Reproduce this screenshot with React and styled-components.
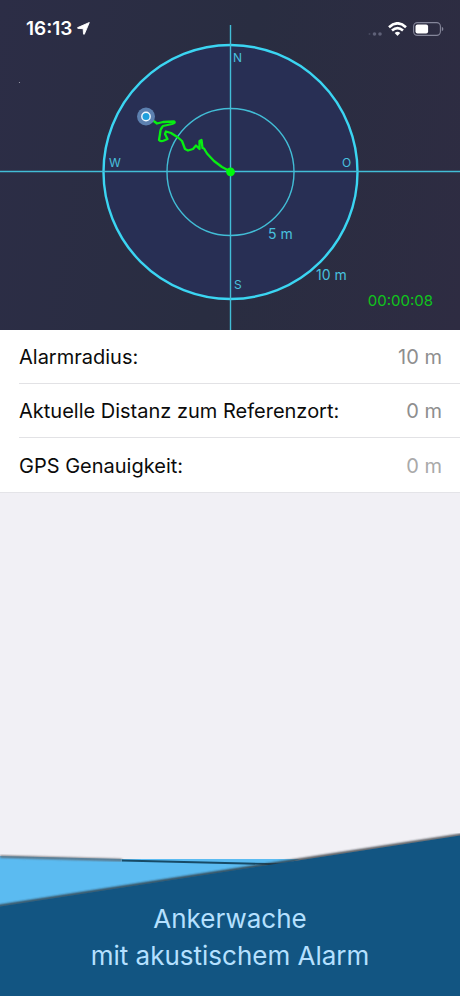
import React from "react";
import styled, { createGlobalStyle } from "styled-components";

const GlobalStyle = createGlobalStyle`
  * {
    box-sizing: border-box;
  }
  body {
    margin: 0;
    background-color: #f1f0f5;
    font-family: Inter, "Liberation Sans", sans-serif;
  }
`;

const S = {
  Page: styled.div`
    display: flex;
    flex-direction: column;
    min-height: 100vh;
  `,
  Header: styled.header`
    position: relative;
    background-color: #2b2d43;
  `,
  StatusBar: styled.div`
    position: absolute;
    top: 0;
    left: 0;
    right: 0;
    display: flex;
    justify-content: space-between;
    align-items: center;
    height: 57px;
    padding: 0 16px 0 26px;
    color: #ffffff;
  `,
  StatusGroup: styled.div`
    display: flex;
    align-items: center;
    gap: ${props => props.$gap}px;
  `,
  Time: styled.time`
    font-size: 19px;
    font-weight: 600;
  `,
  Radar: styled.svg`
    display: block;
    width: 100%;
    height: auto;
    background-image: linear-gradient(100deg, #2c2d46, #292d41 50%, #2e2c42);
  `,
  RadarLabel: styled.text`
    font-size: ${props => (props.$small ? 12 : 14)}px;
    fill: #48c0de;
  `,
  Timer: styled.text`
    font-size: 15px;
    fill: #10c51c;
  `,
  List: styled.dl`
    margin: 0;
    padding-left: 19px;
    background-color: #ffffff;
    border-bottom: 1px solid #e4e4e8;
  `,
  Row: styled.div`
    display: flex;
    justify-content: space-between;
    align-items: center;
    height: 54px;
    padding: 1px 18px 0 0;
    border-bottom: 1px solid #e2e2e5;

    &:last-child {
      border-bottom: 0;
    }
  `,
  Label: styled.dt`
    font-size: 20px;
    color: #0b0b0b;
  `,
  Value: styled.dd`
    margin: 0;
    font-size: 20px;
    color: ${props => (props.$faded ? "#a9a9a9" : "#8e8e8e")};
  `,
  Footer: styled.footer`
    position: relative;
    margin-top: auto;
    padding: 67px 16px 22px;
    text-align: center;
  `,
  Waves: styled.svg`
    position: absolute;
    top: 0;
    left: 0;
    width: 100%;
    height: 100%;
  `,
  Title: styled.h1`
    position: relative;
    margin: 0;
    font-size: 26px;
    font-weight: 400;
    line-height: 37px;
    color: #b5e0ff;
  `
};

const readings = [
  { label: "Alarmradius:", value: "10 m" },
  { label: "Aktuelle Distanz zum Referenzort:", value: "0 m" },
  { label: "GPS Genauigkeit:", value: "0 m", faded: true }
];

const LocationIcon = () => (
  <svg width="13" height="13" viewBox="0 0 13 13" aria-hidden="true">
    <path
      d="M12.3 .5 L.7 5.6 Q.2 6.2 1 6.4 L6.2 6.7 L6.5 12 Q6.8 12.9 7.4 12.1 Z"
      fill="#ffffff"
      stroke="#ffffff"
      strokeWidth="0.9"
      strokeLinejoin="round"
    />
  </svg>
);

const SignalIcon = () => (
  <svg width="15" height="14" viewBox="0 0 15 14" fill="#5f6178" aria-hidden="true">
    <circle cx="2.5" cy="12" r="1" opacity="0.5" />
    <circle cx="7.5" cy="12" r="1.8" />
    <circle cx="13" cy="12" r="1.8" />
  </svg>
);

const WifiIcon = () => (
  <svg width="19" height="14" viewBox="0 0 19 14" aria-hidden="true">
    <g fill="none" stroke="#ffffff" strokeWidth="2.6">
      <path d="M1 5.2 Q9.5 -2.6 18 5.2" />
      <path d="M4 8.5 Q9.5 3.6 15 8.5" />
    </g>
    <path
      d="M6.7 11 Q9.5 8.7 12.3 11 L9.9 13.5 Q9.5 13.9 9.1 13.5 Z"
      fill="#ffffff"
    />
  </svg>
);

const BatteryIcon = () => (
  <svg width="31" height="14" viewBox="0 0 31 14" aria-hidden="true">
    <rect
      x="0.6"
      y="0.6"
      width="26.8"
      height="12.8"
      rx="3.8"
      fill="none"
      stroke="#85869a"
      strokeWidth="1.1"
    />
    <rect x="2.5" y="2.4" width="12.6" height="9.2" rx="2" fill="#ffffff" />
    <path d="M28.8 4.8 Q30.4 5.6 30.4 7 Q30.4 8.4 28.8 9.2 Z" fill="#85869a" />
  </svg>
);

// Position history, from the current position back to the anchor
const TRACK =
  "M146 116 L151 119 L157 123.5 L163 122 L174 121.5 Q176 123 172 124 L163 126" +
  " Q160 129 160 134 L159 140 Q161 142 164 140.5 L167.5 139 L165 134 L166 131.5" +
  " L171 133 L178 137.5 L182 141 L185 149 L188 150.5 L193 149 L196 145.5" +
  " L199.5 149 L199.5 141 L201.5 140 L202.5 148 L204 148.5 L207 153.5" +
  " L214 161 L222 167 L230.5 171.5";

const Radar = () => (
  <S.Radar viewBox="0 0 460 330" role="img" aria-label="Radar">
    <circle
      cx="230.5"
      cy="172"
      r="127"
      fill="#282f54"
      stroke="#3bd5f2"
      strokeWidth="2.4"
    />
    <g fill="none" stroke="#42bdd6" strokeWidth="1.4">
      <circle cx="230.5" cy="172" r="63.5" />
      <path d="M0 171.5 H460" />
      <path d="M230.5 25 V330" />
    </g>
    <S.RadarLabel $small x="233" y="62">N</S.RadarLabel>
    <S.RadarLabel $small x="109" y="167">W</S.RadarLabel>
    <S.RadarLabel $small x="342" y="167">O</S.RadarLabel>
    <S.RadarLabel $small x="234" y="289">S</S.RadarLabel>
    <S.RadarLabel x="268" y="239">5 m</S.RadarLabel>
    <S.RadarLabel x="316" y="280">10 m</S.RadarLabel>
    <S.Timer x="433" y="306" textAnchor="end">00:00:08</S.Timer>
    <path
      d={TRACK}
      fill="none"
      stroke="#08ee12"
      strokeWidth="2.3"
      strokeLinejoin="round"
      strokeLinecap="round"
    />
    <circle cx="230.5" cy="171.8" r="4.4" fill="#00fa0c" />
    <circle cx="146" cy="116.5" r="9" fill="#5c80b0" />
    <circle cx="146" cy="116.5" r="4.2" fill="#1f9fdc" stroke="#eef8ff" strokeWidth="1.4" />
    <circle cx="19.5" cy="82.5" r="0.6" fill="#a5a7b5" />
  </S.Radar>
);

const Waves = () => (
  <S.Waves viewBox="0 0 460 163" preserveAspectRatio="none" aria-hidden="true">
    <defs>
      <filter id="edge" x="-5%" y="-50%" width="110%" height="200%">
        <feGaussianBlur stdDeviation="0.8" />
      </filter>
    </defs>
    <path d="M0 23 L122 26 H300 L230 50 L0 90 Z" fill="#5bbbf1" />
    <path d="M0 23.5 L122 27" stroke="#5a585c" strokeWidth="2.2" filter="url(#edge)" />
    <path d="M122 27.5 L288 31.5" stroke="#174a66" strokeWidth="1.8" />
    <path d="M-4 73.5 L464 1.5" stroke="#2c3036" strokeWidth="2.4" filter="url(#edge)" />
    <path d="M0 73.5 L460 2.5 V163 H0 Z" fill="#125582" />
  </S.Waves>
);

const App = () => (
  <S.Page>
    <GlobalStyle />
    <S.Header>
      <Radar />
      <S.StatusBar>
        <S.StatusGroup $gap={5}>
          <S.Time>16:13</S.Time>
          <LocationIcon />
        </S.StatusGroup>
        <S.StatusGroup $gap={6}>
          <SignalIcon />
          <WifiIcon />
          <BatteryIcon />
        </S.StatusGroup>
      </S.StatusBar>
    </S.Header>

    <S.List>
      {readings.map(item => (
        <S.Row key={item.label}>
          <S.Label>{item.label}</S.Label>
          <S.Value $faded={item.faded}>{item.value}</S.Value>
        </S.Row>
      ))}
    </S.List>

    <S.Footer>
      <Waves />
      <S.Title>
        Ankerwache
        <br />
        mit akustischem Alarm
      </S.Title>
    </S.Footer>
  </S.Page>
);

export default App;
